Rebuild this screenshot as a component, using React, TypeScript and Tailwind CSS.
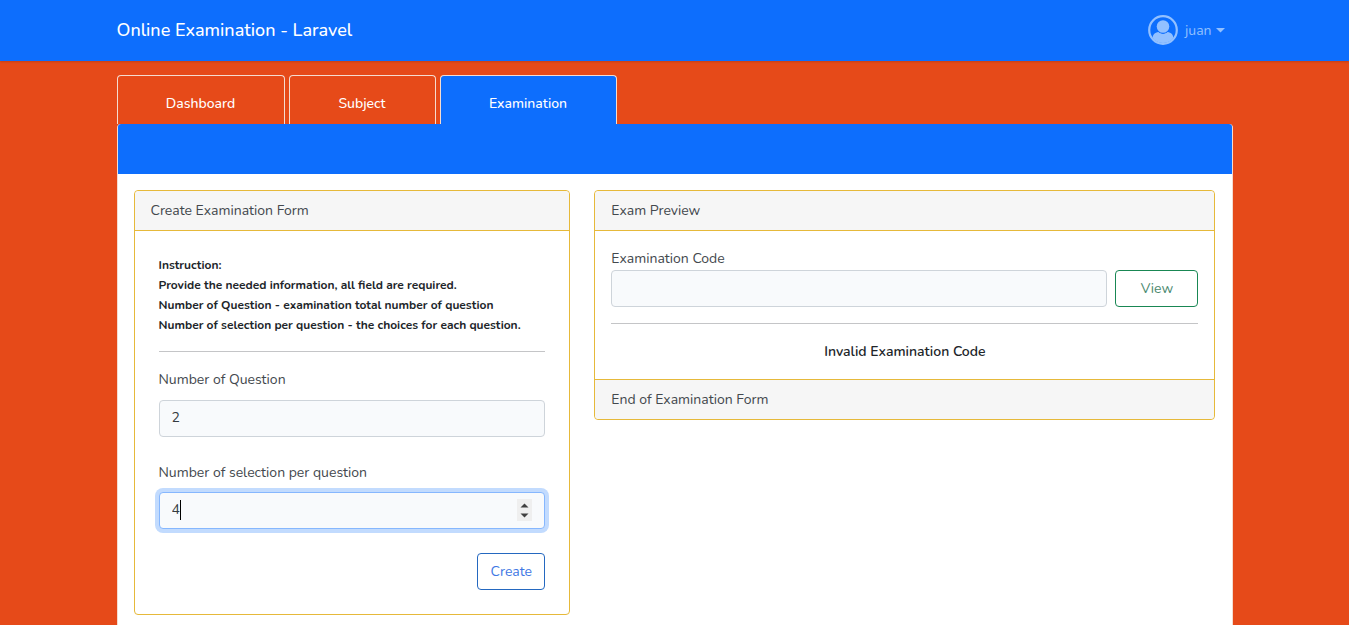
import React from "react";

const panel = "rounded border border-[#e6b93a] bg-white";
const strip = "bg-[#f6f6f6] px-4 py-2";
const field =
  "h-[37px] w-full min-w-0 appearance-none rounded border bg-[#f8fafc] px-3 pb-[2px] text-[#343a40] outline-none [appearance:textfield] [&::-webkit-inner-spin-button]:appearance-none";
const tab =
  "flex items-center justify-center rounded-t border border-b-0 border-[#f5dcd0] pt-[6px] font-medium text-white";

function Avatar() {
  return (
    <svg viewBox="0 0 30 30" className="h-[30px] w-[30px]" aria-hidden="true">
      <defs>
        <clipPath id="avatar-disc">
          <circle cx="15" cy="15" r="13" />
        </clipPath>
      </defs>
      <circle cx="15" cy="15" r="13.8" fill="none" stroke="#92c0ff" strokeWidth="2.2" />
      <g clipPath="url(#avatar-disc)" fill="#92c0ff">
        <path d="M4.5 24c0-4.300 2.300-6.500 6-7 2.600 2.200 6.400 2.200 9 0 3.700.5 6 2.700 6 7v6h-21z" />
        <circle cx="15" cy="11.500" r="7.200" fill="#0d6efd" />
        <circle cx="15" cy="11.500" r="6.300" />
      </g>
    </svg>
  );
}

function Spinner() {
  return (
    <svg viewBox="0 0 15 22" className="h-[22px] w-[15px]" aria-hidden="true">
      <rect width="15" height="22" fill="#efefef" />
      <path d="M3.500 8.500 7.500 4.500l4 4zM3.500 14.500l4 4 4-4z" fill="#404040" />
    </svg>
  );
}

export default function App() {
  return (
    <div className="flex min-h-screen flex-col bg-[#e64a19] font-['Nunito','Open_Sans',sans-serif] text-[14px] leading-[23px] text-[#43484d]">
      <header className="relative bg-[#0d6efd] shadow-[0_1px_2px_rgba(0,0,0,0.15)]">
        <div className="mx-auto flex h-[61px] w-full max-w-[1140px] items-center justify-between px-3 pb-px">
          <a href="#home" className="text-[18px] font-medium text-white">
            Online Examination - Laravel
          </a>
          <button type="button" className="flex items-center gap-[7px] pr-2 text-[#92c0ff]">
            <Avatar />
            <span className="flex items-center gap-1">
              juan
              <svg viewBox="0 0 9 5" className="h-[5px] w-[9px]" aria-hidden="true">
                <path d="M0 0h9L4.500 4.500z" fill="currentColor" />
              </svg>
            </span>
          </button>
        </div>
      </header>

      <main className="mx-auto flex w-full max-w-[1140px] flex-1 flex-col px-3 pt-[14px]">
        <nav className="flex h-[49px] gap-1" aria-label="Sections">
          <a href="#dashboard" className={`${tab} w-[168px]`}>
            Dashboard
          </a>
          <a href="#subject" className={`${tab} w-[147px]`}>
            Subject
          </a>
          <a href="#examination" aria-current="page" className={`${tab} w-[177px] bg-[#0d6efd]`}>
            Examination
          </a>
        </nav>

        <div className="flex flex-1 flex-col rounded-t border-x border-[#f5dcd0] bg-white">
          <div className="h-[50px] rounded-t-[3px] bg-[#0d6efd]" />
          <div className="grid grid-cols-12 items-start gap-6 px-4 pt-4 pb-2">
            <section className={`${panel} col-span-5`}>
              <h2 className={`${strip} rounded-t border-b border-[#e6b93a]`}>Create Examination Form</h2>
              <form className="flex flex-col p-6" onSubmit={(e) => e.preventDefault()}>
                <div className="text-[12px] leading-5 font-bold text-[#212529]">
                  <p>Instruction:</p>
                  <p>Provide the needed information, all field are required.</p>
                  <p>Number of Question - examination total number of question</p>
                  <p>Number of selection per question - the choices for each question.</p>
                </div>
                <hr className="my-4 border-[#c4c5c7]" />
                <label htmlFor="questions" className="mb-[9px]">
                  Number of Question
                </label>
                <input
                  id="questions"
                  type="number"
                  defaultValue="2"
                  className={`${field} border-[#ced4da]`}
                />
                <label htmlFor="selections" className="mt-6 mb-2">
                  Number of selection per question
                </label>
                <div className="relative">
                  <input
                    id="selections"
                    type="number"
                    defaultValue="4"
                    className={`${field} border-[#86b7fe] caret-transparent shadow-[0_0_0_4px_#c2dbfe]`}
                  />
                  <span className="absolute top-2 left-[21px] h-5 w-px bg-black" />
                  <span className="absolute top-[7px] right-[13px]">
                    <Spinner />
                  </span>
                </div>
                <button
                  type="submit"
                  className="mt-6 h-[37px] w-[68px] self-end rounded border border-[#2468c0] text-[#3f78e4]"
                >
                  Create
                </button>
              </form>
            </section>

            <section className={`${panel} col-span-7`}>
              <h2 className={`${strip} rounded-t border-b border-[#e6b93a]`}>Exam Preview</h2>
              <div className="p-4">
                <label htmlFor="code" className="block">
                  Examination Code
                </label>
                <div className="flex gap-2">
                  <input id="code" type="text" className={`${field} border-[#ced4da]`} />
                  <button
                    type="button"
                    className="h-[37px] w-[83px] shrink-0 rounded border border-[#198754] text-[#4c8a70]"
                  >
                    View
                  </button>
                </div>
                <hr className="my-4 border-[#c4c5c7]" />
                <p className="text-center font-semibold text-[#212529]">Invalid Examination Code</p>
              </div>
              <div className={`${strip} rounded-b border-t border-[#e6b93a]`}>End of Examination Form</div>
            </section>
          </div>
        </div>
      </main>
    </div>
  );
}
